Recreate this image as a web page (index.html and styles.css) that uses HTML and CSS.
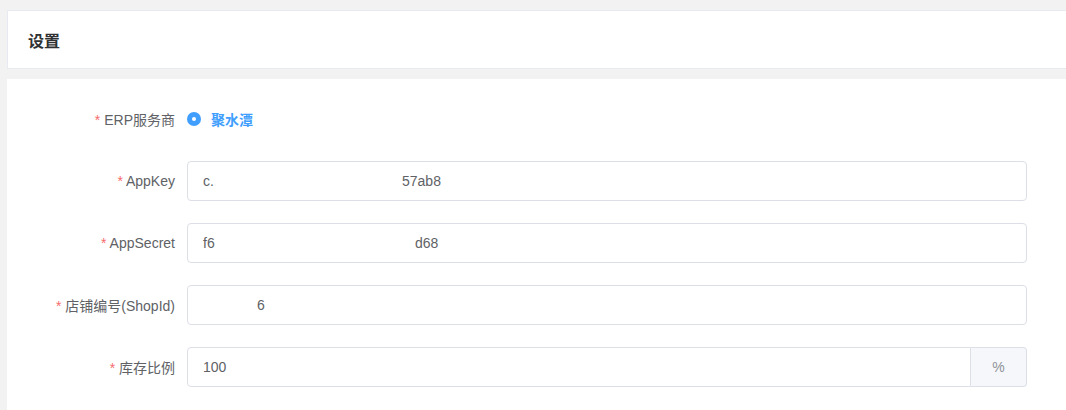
FILE: index.html
```html
<!DOCTYPE html>
<html lang="zh">
<head>
<meta charset="utf-8">
<link rel="stylesheet" href="styles.css">
</head>
<body>
<div class="page">
  <div class="card header-card">
    <div class="title">设置</div>
  </div>
  <div class="card form-card">
    <div class="form-item radio-item">
      <label class="label"><span class="req">*</span> ERP服务商</label>
      <div class="control">
        <span class="radio"><span class="radio-dot"></span></span>
        <span class="radio-text">聚水潭</span>
      </div>
    </div>
    <div class="form-item">
      <label class="label"><span class="req">*</span> AppKey</label>
      <div class="control">
        <div class="input"><span class="v w1">c.</span><span class="v">57ab8</span></div>
      </div>
    </div>
    <div class="form-item">
      <label class="label"><span class="req">*</span> AppSecret</label>
      <div class="control">
        <div class="input"><span class="v w2">f6</span><span class="v">d68</span></div>
      </div>
    </div>
    <div class="form-item">
      <label class="label"><span class="req">*</span> 店铺编号(ShopId)</label>
      <div class="control">
        <div class="input"><span class="v w3"></span><span class="v">6</span></div>
      </div>
    </div>
    <div class="form-item">
      <label class="label"><span class="req">*</span> 库存比例</label>
      <div class="control">
        <div class="input-group">
          <div class="input grouped"><span class="v">100</span></div>
          <div class="append">%</div>
        </div>
      </div>
    </div>
    <div class="form-item">
      <div class="label"></div>
      <div class="control">
        <button class="btn" aria-label="保存"></button>
      </div>
    </div>
  </div>
</div>
</body>
</html>
```

FILE: styles.css
```css
html, body {
  margin: 0;
  padding: 0;
  background: #f2f2f2;
  overflow: hidden;
  font-family: "Liberation Sans", "Noto Sans CJK SC", sans-serif;
}
.page {
  padding: 10px 0 0 7px;
  width: 1080px;
}
.card {
  background: #fff;
  box-sizing: border-box;
}
.header-card {
  border: 1px solid #e8eaf1;
  border-right: none;
  height: 59px;
  padding: 0 20px;
  display: flex;
  align-items: center;
}
.title {
  font-size: 16px;
  font-weight: bold;
  color: #303133;
}
.form-card {
  margin-top: 10px;
  padding: 20px 0 0 20px;
  height: 400px;
}
.form-item {
  display: flex;
  align-items: center;
  height: 40px;
  margin-bottom: 22px;
}
.label {
  width: 160px;
  box-sizing: border-box;
  padding-right: 12px;
  text-align: right;
  font-size: 14px;
  color: #606266;
  flex-shrink: 0;
}
.req {
  color: #f56c6c;
}
.control {
  display: flex;
  align-items: center;
}
.radio {
  width: 14px;
  height: 14px;
  border-radius: 50%;
  background: #409eff;
  display: flex;
  align-items: center;
  justify-content: center;
  margin-right: 10px;
}
.radio-dot {
  width: 4px;
  height: 4px;
  border-radius: 50%;
  background: #fff;
}
.radio-text {
  color: #409eff;
  font-weight: bold;
  font-size: 14px;
}
.input {
  width: 840px;
  height: 40px;
  box-sizing: border-box;
  border: 1px solid #dcdfe6;
  border-radius: 4px;
  padding: 0 15px;
  display: flex;
  align-items: center;
  font-size: 14px;
  color: #606266;
  background: #fff;
}
.v {
  display: inline-block;
}
.w1 { width: 199px; }
.w2 { width: 212px; }
.w3 { width: 54px; }
.input-group {
  display: flex;
  width: 840px;
}
.input.grouped {
  width: 784px;
  border-radius: 4px 0 0 4px;
}
.append {
  width: 56px;
  height: 40px;
  box-sizing: border-box;
  border: 1px solid #dcdfe6;
  border-left: none;
  border-radius: 0 4px 4px 0;
  background: #f5f7fa;
  color: #909399;
  font-size: 14px;
  display: flex;
  align-items: center;
  justify-content: center;
}
.btn {
  width: 69px;
  height: 36px;
  margin-left: 1px;
  border: none;
  border-radius: 4px;
  background: #409eff;
  color: #fff;
  font-size: 14px;
  font-family: inherit;
  align-self: flex-start;
}
```
